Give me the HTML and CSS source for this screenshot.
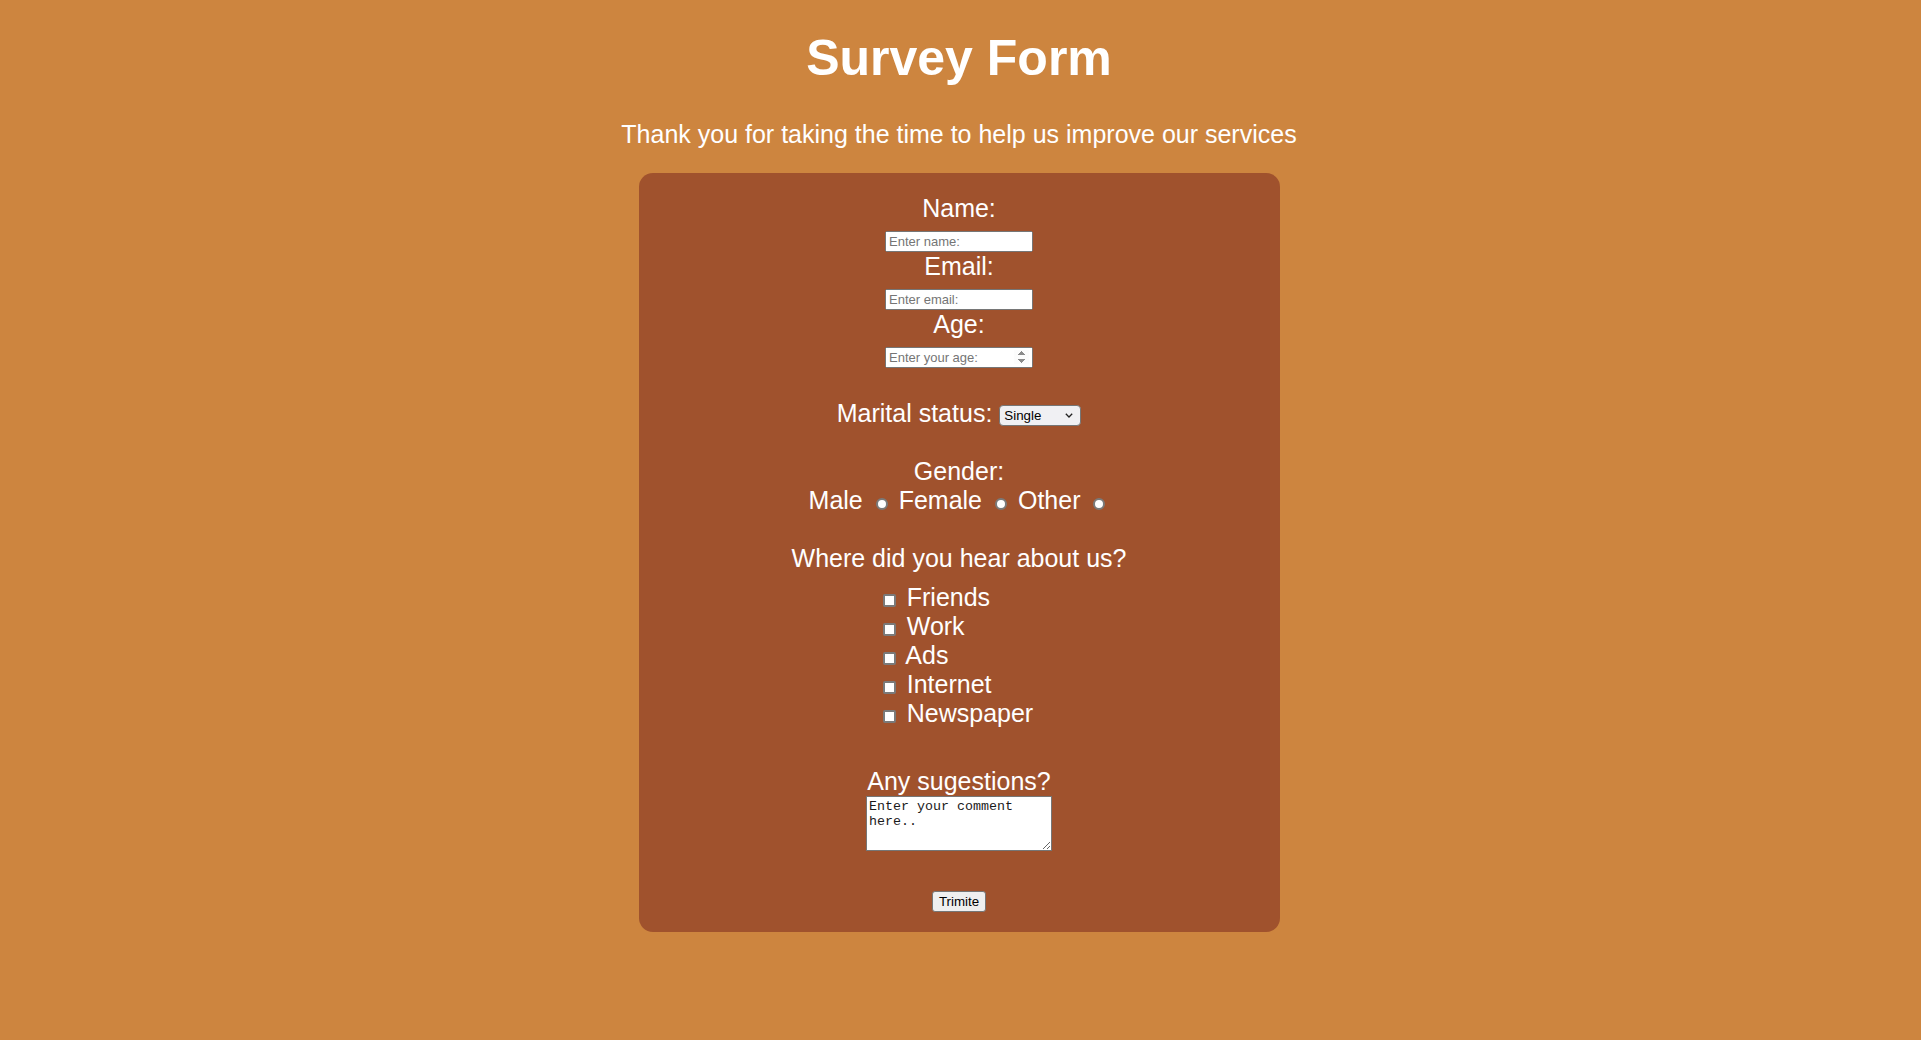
FILE: index.html
```html
<!DOCTYPE html>
<html lang="en">
<head>
<meta charset="utf-8">
<title>Survey Form</title>
<link rel="stylesheet" href="styles.css">
</head>
<body>
<h1 id="title" class="title">Survey Form</h1>
<p id="description" class="description">Thank you for taking the time to help us improve our services</p>
<form id="survey-form" class="survey">
  <label class="field-label" for="name" id="name-label">Name:</label>
  <div class="field-row"><input id="name" class="text-input" type="text" placeholder="Enter name:"></div>
  <label class="field-label" for="email" id="email-label">Email:</label>
  <div class="field-row"><input id="email" class="text-input" type="email" placeholder="Enter email:"></div>
  <label class="field-label" for="number" id="number-label">Age:</label>
  <div class="field-row"><input id="number" class="text-input" type="number" placeholder="Enter your age:"></div>

  <div class="section section-marital">Marital status: <span class="select-wrap"><select id="dropdown" class="select"><option>Single</option><option>Married</option><option>Divorced</option><option>Widowed</option></select><svg class="select-chevron" width="8" height="5" viewBox="0 0 8 5" aria-hidden="true"><path d="M0.8 0.8 L4 4 L7.2 0.8" fill="none" stroke="#222" stroke-width="1.3"/></svg></span></div>

  <div class="section section-gap">Gender:</div>
  <div class="radio-row">Male <input class="radio" type="radio" name="gender" value="male"> Female <input class="radio" type="radio" name="gender" value="female"> Other <input class="radio" type="radio" name="gender" value="other"></div>

  <div class="section section-gap">Where did you hear about us?</div>
  <div class="checks">
    <div class="check-list">
      <label class="check-item"><input class="checkbox" type="checkbox" value="friends"> Friends</label>
      <label class="check-item"><input class="checkbox" type="checkbox" value="work"> Work</label>
      <label class="check-item"><input class="checkbox" type="checkbox" value="ads"> Ads</label>
      <label class="check-item"><input class="checkbox" type="checkbox" value="internet"> Internet</label>
      <label class="check-item"><input class="checkbox" type="checkbox" value="newspaper"> Newspaper</label>
    </div>
  </div>

  <div class="section section-comment">Any sugestions?</div>
  <textarea class="comment" rows="3" placeholder="Enter your comment here.."></textarea>

  <div class="submit-row"><button id="submit" class="submit" type="submit">Trimite</button></div>
</form>
</body>
</html>
```

FILE: styles.css
```css
html,
body {
  margin: 0;
  padding: 0;
}

body {
  padding-right: 3px;
  background: #cd853f;
  color: #ffffff;
  font-family: "Liberation Sans", Arial, sans-serif;
}

.title {
  margin: 30px 0 0;
  font-size: 50px;
  line-height: 57px;
  font-weight: 700;
  text-align: center;
}

.description {
  margin: 33px 0 24px;
  font-size: 25px;
  line-height: normal;
  text-align: center;
}

.survey {
  box-sizing: border-box;
  width: 641px;
  margin: 0 auto;
  padding: 21px 0 20px;
  background: #a0522d;
  border-radius: 14px;
  text-align: center;
  font-size: 25px;
  line-height: normal;
}

.field-label {
  display: block;
}

.field-row {
  line-height: normal;
}

.text-input {
  box-sizing: border-box;
  width: 148px;
  height: 21px;
  font: 13px "Liberation Sans", Arial, sans-serif;
  color: #000;
  vertical-align: baseline;
}

.text-input::placeholder {
  color: #757575;
}

.text-input::-webkit-inner-spin-button {
  opacity: 1;
}

.section-marital {
  margin-top: 31px;
}

.select-wrap {
  position: relative;
  display: inline-block;
  vertical-align: 2px;
  line-height: 0;
}

.select {
  -webkit-appearance: none;
  appearance: none;
  box-sizing: border-box;
  width: 82px;
  height: 21px;
  margin: 0;
  padding: 0 18px 0 4px;
  font: 13.333px "Liberation Sans", Arial, sans-serif;
  color: #000;
  background: #f0f0f3;
  border: 1px solid #767676;
  border-radius: 4px;
}

.select-chevron {
  position: absolute;
  right: 8px;
  top: 8px;
  pointer-events: none;
}

.section-gap {
  margin-top: 29px;
}

.radio {
  -webkit-appearance: none;
  appearance: none;
  box-sizing: border-box;
  width: 12px;
  height: 12px;
  margin: 3px 4px 0 6px;
  vertical-align: -1px;
  background: #fff;
  border: 2px solid #7a7a7a;
  border-radius: 50%;
}

.checks {
  margin-top: 10px;
}

.check-list {
  display: inline-block;
  padding-right: 6px;
  text-align: left;
}

.check-item {
  display: block;
}

.checkbox {
  -webkit-appearance: none;
  appearance: none;
  box-sizing: border-box;
  width: 13px;
  height: 13px;
  margin: 3px 4px 0 4px;
  vertical-align: -1px;
  background: #fff;
  border: 2px solid #7a7a7a;
  border-radius: 2px;
}

.section-comment {
  margin-top: 39px;
}

.comment {
  display: block;
  box-sizing: border-box;
  width: 186px;
  height: 55px;
  margin: 0 auto;
  font: 13.333px "Liberation Mono", "Courier New", monospace;
  color: #000;
  border: 1px solid #767676;
  padding: 2px;
}

.comment::placeholder {
  color: #1a1a1a;
}

.submit-row {
  display: flex;
  justify-content: center;
  margin-top: 40px;
}

.submit {
  box-sizing: border-box;
  height: 21px;
  padding: 1px 6px;
  font: 13.333px "Liberation Sans", Arial, sans-serif;
  line-height: normal;
  color: #000;
  background: #efefef;
  border: 1px solid #767676;
  border-radius: 3px;
}
```
